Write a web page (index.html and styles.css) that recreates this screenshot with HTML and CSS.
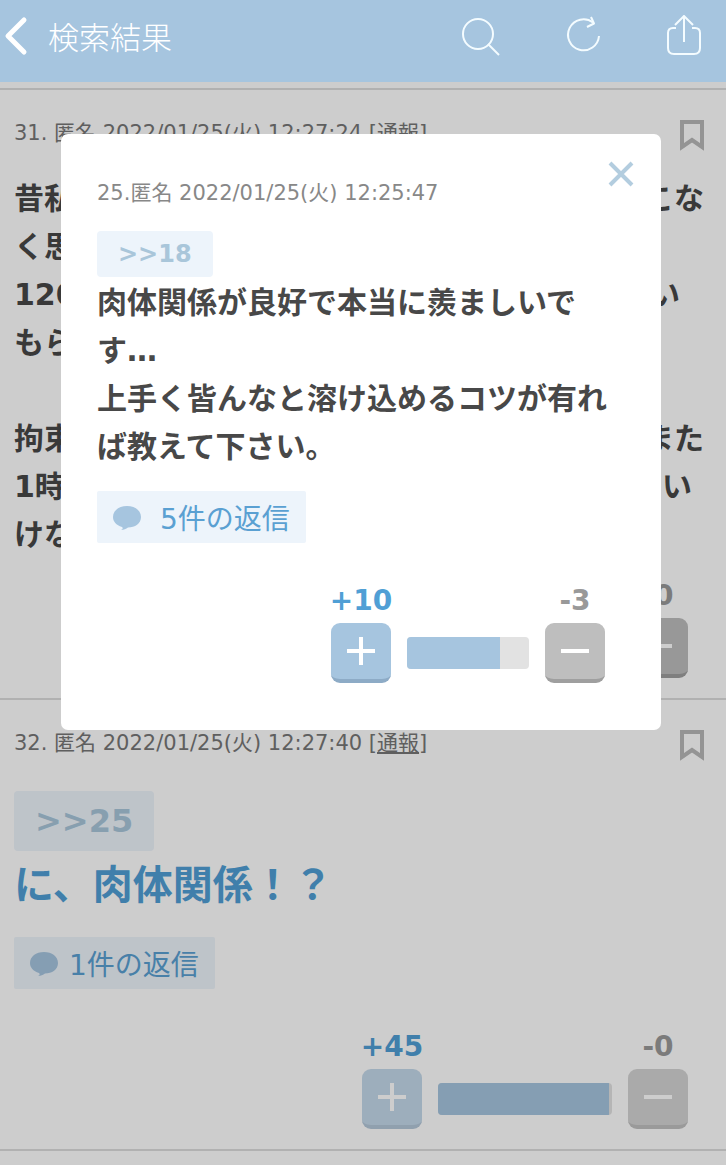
FILE: index.html
```html
<!DOCTYPE html>
<html lang="ja">
<head>
    <meta charset="UTF-8">
    <meta name="viewport" content="width=device-width, initial-scale=1.0">
    <title>検索結果</title>
    <link rel="stylesheet" href="styles.css">
</head>
<body>
    <header class="navbar">
        <button class="icon-btn back" type="button" aria-label="戻る">
            <svg width="24" height="40" viewBox="0 0 24 40"><path d="M20 4 L4 20 L20 36" fill="none" stroke="#fff" stroke-width="5" stroke-linecap="round" stroke-linejoin="round"/></svg>
        </button>
        <h1>検索結果</h1>
        <div class="nav-icons">
            <button class="icon-btn" type="button" aria-label="検索">
                <svg width="40" height="42" viewBox="0 0 40 42" fill="none" stroke="#f4fcff" stroke-width="2"><circle cx="16" cy="19" r="15"/><path d="M26 29 L37 40"/></svg>
            </button>
            <button class="icon-btn" type="button" aria-label="更新">
                <svg width="40" height="42" viewBox="0 0 40 42" fill="none" stroke="#f4fcff" stroke-width="2"><path d="M36 21 A15.500 15.500 0 1 1 30 7.500"/><path d="M28 2 L31 8.500 L24 12" stroke-linejoin="round"/></svg>
            </button>
            <button class="icon-btn" type="button" aria-label="共有">
                <svg width="40" height="42" viewBox="0 0 40 42" fill="none" stroke="#f4fcff" stroke-width="2"><path d="M12 13 H9 Q4 13 4 18 V33 Q4 39 10 39 H30 Q36 39 36 33 V18 Q36 13 31 13 H28"/><path d="M20 27 V1"/><path d="M11 10 L20 1 L29 10"/></svg>
            </button>
        </div>
    </header>

    <main>
        <article class="post">
            <div class="post-head">
                <p class="meta">31. 匿名 2022/01/25(火) 12:27:24 [<a href="#">通報</a>]</p>
                <button class="icon-btn" type="button" aria-label="ブックマーク">
                    <svg width="24" height="31" viewBox="0 0 24 31"><path d="M2 2 H22 V27 L12 20 L2 27 Z" fill="none" stroke="#b8b8b8" stroke-width="4"/></svg>
                </button>
            </div>
            <div class="post-body">
                <p class="text line"><span>昔私</span><span>こな</span></p>
                <p class="text line"><span>く思</span></p>
                <p class="text line short"><span>120</span><span>い</span></p>
                <p class="text line"><span>もら</span></p>
                <p class="text line"></p>
                <p class="text line"><span>拘束</span><span>また</span></p>
                <p class="text line mid"><span>1時</span><span>い</span></p>
                <p class="text line"><span>けな</span></p>
            </div>
            <div class="votes">
                <div class="vote">
                    <span class="count">-0</span>
                    <button class="vote-btn down" type="button" aria-label="マイナス"></button>
                </div>
            </div>
        </article>

        <article class="post voted">
            <div class="post-head">
                <p class="meta">32. 匿名 2022/01/25(火) 12:27:40 [<a href="#">通報</a>]</p>
                <button class="icon-btn" type="button" aria-label="ブックマーク">
                    <svg width="24" height="31" viewBox="0 0 24 31"><path d="M2 2 H22 V27 L12 20 L2 27 Z" fill="none" stroke="#b8b8b8" stroke-width="4"/></svg>
                </button>
            </div>
            <div class="post-body">
                <a class="quote large" href="#">&gt;&gt;25</a>
                <p class="text popular">に、肉体関係！？</p>
            </div>
            <a class="replies" href="#">
                <svg width="30" height="26" viewBox="0 0 30 26"><path d="M15 2 C23 2 29 6.500 29 13 C29 19.500 23 23.500 16 23.500 C14 25 12 26 9 26 C11 25 11 24 10 23 C4 21 1 17.500 1 13 C1 6.500 7 2 15 2 Z" fill="#a6c5df"/></svg>
                1件の返信
            </a>
            <div class="votes">
                <div class="vote">
                    <span class="count plus">+45</span>
                    <button class="vote-btn up" type="button" aria-label="プラス"></button>
                </div>
                <div class="bar"><div class="bar-fill" style="width: 98%"></div></div>
                <div class="vote">
                    <span class="count">-0</span>
                    <button class="vote-btn down" type="button" aria-label="マイナス"></button>
                </div>
            </div>
        </article>

        <div class="overlay">
            <section class="modal" role="dialog">
                <button class="icon-btn close" type="button" aria-label="閉じる">
                    <svg width="26" height="26" viewBox="0 0 26 26"><path d="M2 2 L24 24 M24 2 L2 24" stroke="#b3cddf" stroke-width="4"/></svg>
                </button>
                <p class="meta">25.匿名 2022/01/25(火) 12:25:47</p>
                <div class="post-body">
                    <a class="quote" href="#">&gt;&gt;18</a>
                    <p class="text">肉体関係が良好で本当に羨ましいです…<br>上手く皆んなと溶け込めるコツが有れば教えて下さい。</p>
                </div>
                <a class="replies" href="#">
                    <svg width="30" height="26" viewBox="0 0 30 26"><path d="M15 2 C23 2 29 6.500 29 13 C29 19.500 23 23.500 16 23.500 C14 25 12 26 9 26 C11 25 11 24 10 23 C4 21 1 17.500 1 13 C1 6.500 7 2 15 2 Z" fill="#a6c5df"/></svg>
                    5件の返信
                </a>
                <div class="votes">
                    <div class="vote">
                        <span class="count plus">+10</span>
                        <button class="vote-btn up" type="button" aria-label="プラス"></button>
                    </div>
                    <div class="bar"><div class="bar-fill" style="width: 76%"></div></div>
                    <div class="vote">
                        <span class="count">-3</span>
                        <button class="vote-btn down" type="button" aria-label="マイナス"></button>
                    </div>
                </div>
            </section>
        </div>
    </main>
</body>
</html>
```

FILE: styles.css
```css
* {
    box-sizing: border-box;
}

body {
    margin: 0;
    font-family: "DejaVu Sans", "Noto Sans CJK JP", sans-serif;
    background-color: #fff;
    color: #484848;
}

h1, p {
    margin: 0;
}

.icon-btn {
    padding: 0;
    border: none;
    background: none;
    cursor: pointer;
}

.icon-btn svg {
    display: block;
}

/* header */
.navbar {
    display: flex;
    align-items: center;
    height: 82px;
    padding: 0 22px 10px 4px;
    background-color: #a6c5df;
}

.navbar h1 {
    margin-left: 20px;
    font-family: "Noto Sans CJK JP", sans-serif;
    font-size: 31px;
    font-weight: 300;
    line-height: 38px;
    color: #fff;
}

.nav-icons {
    display: flex;
    gap: 61px;
    margin-left: auto;
}

/* posts */
main {
    position: relative;
    min-height: calc(100vh - 82px);
    padding-top: 6px;
}

.post {
    padding: 30px 22px 20px 14px;
    border-top: 2px solid #ddd;
}

.post.voted {
    border-bottom: 2px solid #ddd;
}

.post-head {
    display: flex;
    justify-content: space-between;
    align-items: flex-start;
}

.meta {
    font-size: 21px;
    line-height: 26px;
    color: #777;
}

.meta a {
    color: inherit;
}

.post-body {
    margin-top: 24px;
}

.text {
    font-size: 30px;
    line-height: 48px;
    font-weight: bold;
}

.line {
    display: flex;
    justify-content: space-between;
    min-height: 48px;
}

.line.short {
    padding-right: 24px;
}

.line.mid {
    padding-right: 12px;
}

.popular {
    font-size: 40px;
    line-height: 64px;
    color: #509fd5;
}

.quote {
    display: block;
    width: fit-content;
    margin-bottom: 2px;
    padding: 0 21px;
    border-radius: 4px;
    background-color: #edf4fb;
    font-size: 24px;
    line-height: 46px;
    font-weight: bold;
    color: #a9c6da;
    text-decoration: none;
}

.quote.large {
    font-size: 32px;
    line-height: 60px;
}

.voted .post-body {
    margin-top: 30px;
}

.replies {
    display: flex;
    align-items: center;
    gap: 10px;
    width: fit-content;
    height: 52px;
    margin-top: 20px;
    padding: 0 16px 0 15px;
    border-radius: 2px;
    background-color: #edf4fb;
    font-size: 28px;
    color: #5aa0d2;
    text-decoration: none;
}

/* plus / minus votes */
.votes {
    display: flex;
    justify-content: flex-end;
    align-items: flex-end;
    gap: 16px;
    margin: 21px 16px 0 0;
}

.replies + .votes {
    margin-top: 42px;
}

.vote {
    display: flex;
    flex-direction: column;
    align-items: center;
    gap: 6px;
    width: 60px;
}

.count {
    font-size: 28px;
    line-height: 32px;
    font-weight: bold;
    color: #999;
}

.count.plus {
    color: #509fd5;
}

.vote-btn {
    width: 60px;
    height: 60px;
    padding: 0;
    border: none;
    border-bottom: 4px solid #9f9f9f;
    border-radius: 9px;
    background: linear-gradient(#fff, #fff) center / 28px 4px no-repeat #bebebe;
    cursor: pointer;
}

.vote-btn.up {
    border-bottom-color: #8dabc6;
    background:
        linear-gradient(#fff, #fff) center / 28px 4px no-repeat,
        linear-gradient(#fff, #fff) center / 4px 28px no-repeat,
        #a6c5df;
}

.voted .vote-btn {
    opacity: 0.65;
}

.bar {
    width: 174px;
    height: 32px;
    margin-bottom: 14px;
    border-radius: 4px;
    background-color: #e2e2e2;
    overflow: hidden;
}

.bar-fill {
    height: 100%;
    background-color: #a6c5df;
}

/* popup */
.overlay {
    position: absolute;
    inset: 0;
    padding: 52px 65px 0 61px;
    background-color: rgba(0, 0, 0, 0.196);
}

.modal {
    position: relative;
    padding: 46px 40px 47px 36px;
    border-radius: 7px;
    background-color: #fff;
}

.close {
    position: absolute;
    top: 27px;
    right: 27px;
}

.modal .meta {
    color: #888;
}

.modal .post-body {
    margin-top: 25px;
}

.modal .replies {
    gap: 18px;
}

.modal .bar {
    width: 122px;
}
```
